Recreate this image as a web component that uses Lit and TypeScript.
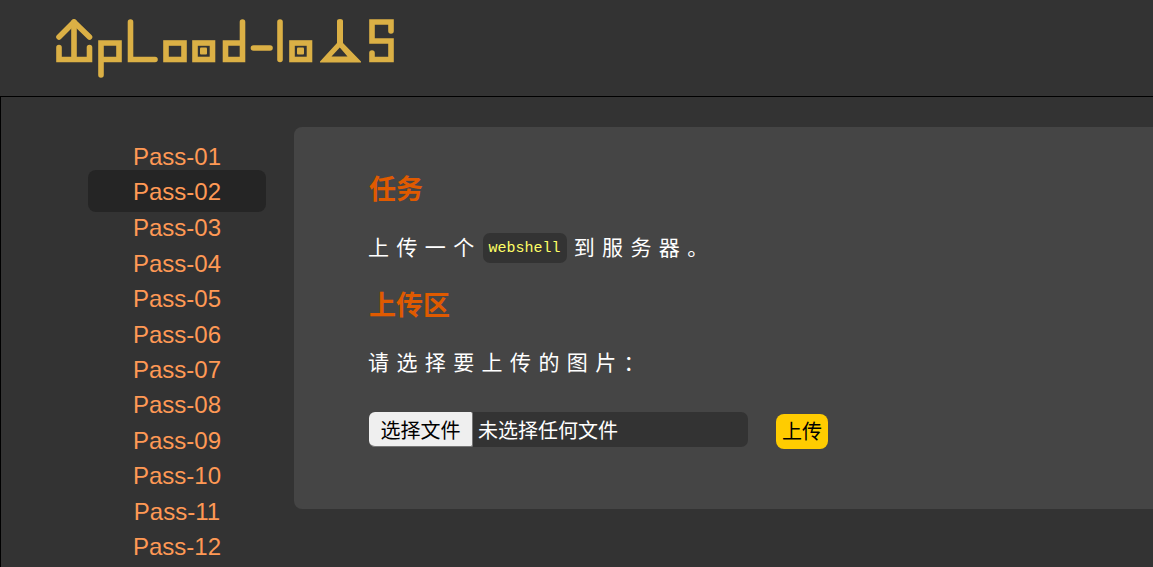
import { LitElement, html, css } from "lit";
import { customElement } from "lit/decorators.js";

const PASSES = ["01", "02", "03", "04", "05", "06", "07", "08", "09", "10", "11", "12"];

@customElement("app-root")
export class AppRoot extends LitElement {
  static styles = css`
    :host {
      display: block;
      height: 567px;
      overflow: hidden;
      background: #333;
      font-family: "Liberation Sans", "Noto Sans CJK SC", sans-serif;
    }
    .head {
      height: 97px;
      box-sizing: border-box;
      padding: 12px 0 0 50px;
      background: #333;
      border-bottom: 1px solid #000;
    }
    .logo {
      display: block;
    }
    .main {
      display: flex;
      align-items: flex-start;
      height: 470px;
      box-sizing: border-box;
      padding: 30px 0 0 88px;
      border-left: 1px solid #000;
    }
    .menu {
      width: 178px;
      flex: none;
      margin: 12px 28px 0 -1px;
    }
    .menu a {
      display: block;
      height: 35.4px;
      line-height: 35.4px;
      text-align: center;
      font-size: 24px;
      color: #ff9955;
      border-radius: 8px;
    }
    .menu a.on {
      height: 42px;
      line-height: 43px;
      margin: -4px 0 -2px;
      background: #252525;
    }
    .panel {
      flex: 1;
      height: 382px;
      box-sizing: border-box;
      padding: 44px 0 0 75px;
      background: #454545;
      border-radius: 8px 0 0 8px;
    }
    h3 {
      margin: 0;
      font-size: 27px;
      line-height: 38px;
      color: #e05a00;
    }
    p {
      margin: 0 0 0 -1px;
      color: #fff;
      font-size: 21px;
      letter-spacing: 7.4px;
    }
    .task {
      margin-top: 24px;
      line-height: 30px;
    }
    code {
      display: inline-block;
      margin: 0 7px 0 1px;
      padding: 0 6px;
      line-height: 32px;
      height: 30px;
      vertical-align: top;
      border-radius: 7px;
      background: #333;
      color: #ffff66;
      font-family: "Liberation Mono", monospace;
      font-size: 15px;
      letter-spacing: 0;
    }
    .area {
      margin-top: 24px;
    }
    .pick {
      margin-top: 23px;
      line-height: 30px;
    }
    .form {
      display: flex;
      align-items: flex-start;
      margin-top: 34px;
    }
    .file {
      display: flex;
      width: 379px;
      height: 35px;
      border-radius: 7px;
      background: #333;
      color: #fff;
      font-size: 20px;
      line-height: 39px;
    }
    .choose {
      width: 104px;
      height: 35px;
      box-sizing: border-box;
      margin-right: 5px;
      text-align: center;
      line-height: 38px;
      background: #efefef;
      border: 1px solid #767676;
      border-width: 0 1px 1px 0;
      border-radius: 6px 2px 2px 6px;
      color: #000;
    }
    .send {
      width: 52px;
      height: 35px;
      margin: 2px 0 0 28px;
      padding: 0 0 3px;
      border: none;
      border-radius: 8px;
      background: #ffcc00;
      color: #000;
      font-family: inherit;
      font-size: 20px;
    }
  `;

  render() {
    return html`
      <div class="head">
        <svg class="logo" width="350" height="70" viewBox="50 12 350 70" fill="none"
          stroke="#dbb045" stroke-width="5.6" stroke-linecap="round">
          <path d="M59 37 L74 22 L89.5 37" stroke-linejoin="round" />
          <path d="M74 22 V59 M59 47.5 V59.5 H89.5 V47.5" />
          <path d="M101 75 V43 H119 V59.5 H101" />
          <path d="M130.5 22 V59.5 H155" />
          <rect x="166" y="43" width="18" height="16.5" />
          <rect x="195" y="43" width="17.5" height="16.5" />
          <rect x="200" y="47.5" width="7" height="7" rx="1" fill="#dbb045" stroke="none" />
          <path d="M242.5 22 V59.5 H225.5 V43 H242.5" />
          <path d="M253.5 48 H270" />
          <path d="M280 22 V59.5" />
          <rect x="292" y="43" width="17.5" height="16.5" />
          <rect x="297" y="47.5" width="7" height="7" rx="1" fill="#dbb045" stroke="none" />
          <path
            d="M337 21 Q337 19 340 19 Q343 19 343 21 V43 L361 61.5 V62.5 H320 V61.5 L337 43 Z M339.8 47.5 L331.5 56.5 H347.5 Z"
            fill="#dbb045" fill-rule="evenodd" stroke="none"
          />
          <path d="M391 31 V22 H372 V41 H391 V59.5 H372 V53" />
        </svg>
      </div>
      <div class="main">
        <nav class="menu">
          ${PASSES.map(
            (n) => html`<a class=${n === "02" ? "on" : ""}>Pass-${n}</a>`
          )}
        </nav>
        <section class="panel">
          <h3>任务</h3>
          <p class="task">上传一个<code>webshell</code>到服务器。</p>
          <h3 class="area">上传区</h3>
          <p class="pick">请选择要上传的图片：</p>
          <div class="form">
            <div class="file">
              <span class="choose">选择文件</span>
              <span>未选择任何文件</span>
            </div>
            <button class="send">上传</button>
          </div>
        </section>
      </div>
    `;
  }
}
